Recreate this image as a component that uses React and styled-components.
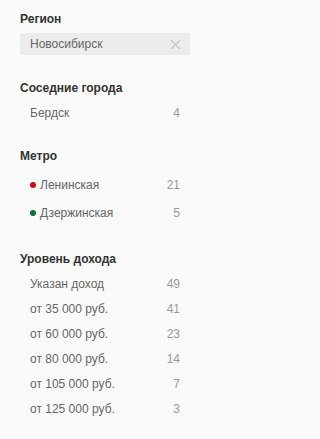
import React from 'react';
import styled, { createGlobalStyle } from 'styled-components';

const GlobalStyle = createGlobalStyle`
  html, body {
    margin: 0;
    padding: 0;
    background: #fafafa;
  }
  body {
    font-family: 'Liberation Sans', Arial, sans-serif;
  }
`;

const Sidebar = styled.div`
  width: 170px;
  padding: 9px 23px 0 20px;
`;

const Section = styled.div`
  margin-bottom: ${(p) => p.space ?? 22}px;
`;

const Heading = styled.div`
  font-size: 12px;
  font-weight: bold;
  color: #333;
  line-height: 20px;
  margin-bottom: ${(p) => p.gap || 2}px;
`;

const SelectedBox = styled.div`
  display: flex;
  align-items: center;
  justify-content: space-between;
  height: 22px;
  padding: 0 9px 0 10px;
  background: #ececec;
  font-size: 12px;
  color: #666;
`;

const ClearBtn = styled.span`
  display: flex;
  align-items: center;
  cursor: pointer;
`;

const Row = styled.div`
  display: flex;
  align-items: center;
  justify-content: space-between;
  height: ${(p) => p.h || 25}px;
  padding: 0 10px;
  font-size: 12px;
  color: #666;
`;

const Label = styled.span`
  display: flex;
  align-items: center;
`;

const Dot = styled.span`
  display: inline-block;
  width: 6px;
  height: 6px;
  border-radius: 50%;
  margin-right: 4px;
  background: ${(p) => p.color};
`;

const Count = styled.span`
  color: #999;
`;

const metro = [
  { name: 'Ленинская', count: 21, color: '#c5111c' },
  { name: 'Дзержинская', count: 5, color: '#12703a' },
];

const income = [
  { name: 'Указан доход', count: 49 },
  { name: 'от 35 000 руб.', count: 41 },
  { name: 'от 60 000 руб.', count: 23 },
  { name: 'от 80 000 руб.', count: 14 },
  { name: 'от 105 000 руб.', count: 7 },
  { name: 'от 125 000 руб.', count: 3 },
];

const App = () => {
  return (
    <>
      <GlobalStyle />
      <Sidebar>
        <Section space={23}>
          <Heading gap={4}>Регион</Heading>
          <SelectedBox>
            Новосибирск
            <ClearBtn>
              <svg width="11" height="11" viewBox="0 0 11 11">
                <path d="M1 1L10 10M10 1L1 10" stroke="#c4c4c4" strokeWidth="1.3" />
              </svg>
            </ClearBtn>
          </SelectedBox>
        </Section>
        <Section space={21}>
          <Heading>Соседние города</Heading>
          <Row>
            <span>Бердск</span>
            <Count>4</Count>
          </Row>
        </Section>
        <Section>
          <Heading gap={5}>Метро</Heading>
          {metro.map((m) => (
            <Row key={m.name} h={28}>
              <Label>
                <Dot color={m.color} />
                {m.name}
              </Label>
              <Count>{m.count}</Count>
            </Row>
          ))}
        </Section>
        <Section space={0}>
          <Heading>Уровень дохода</Heading>
          {income.map((i) => (
            <Row key={i.name}>
              <span>{i.name}</span>
              <Count>{i.count}</Count>
            </Row>
          ))}
        </Section>
      </Sidebar>
    </>
  );
};

export default App;
